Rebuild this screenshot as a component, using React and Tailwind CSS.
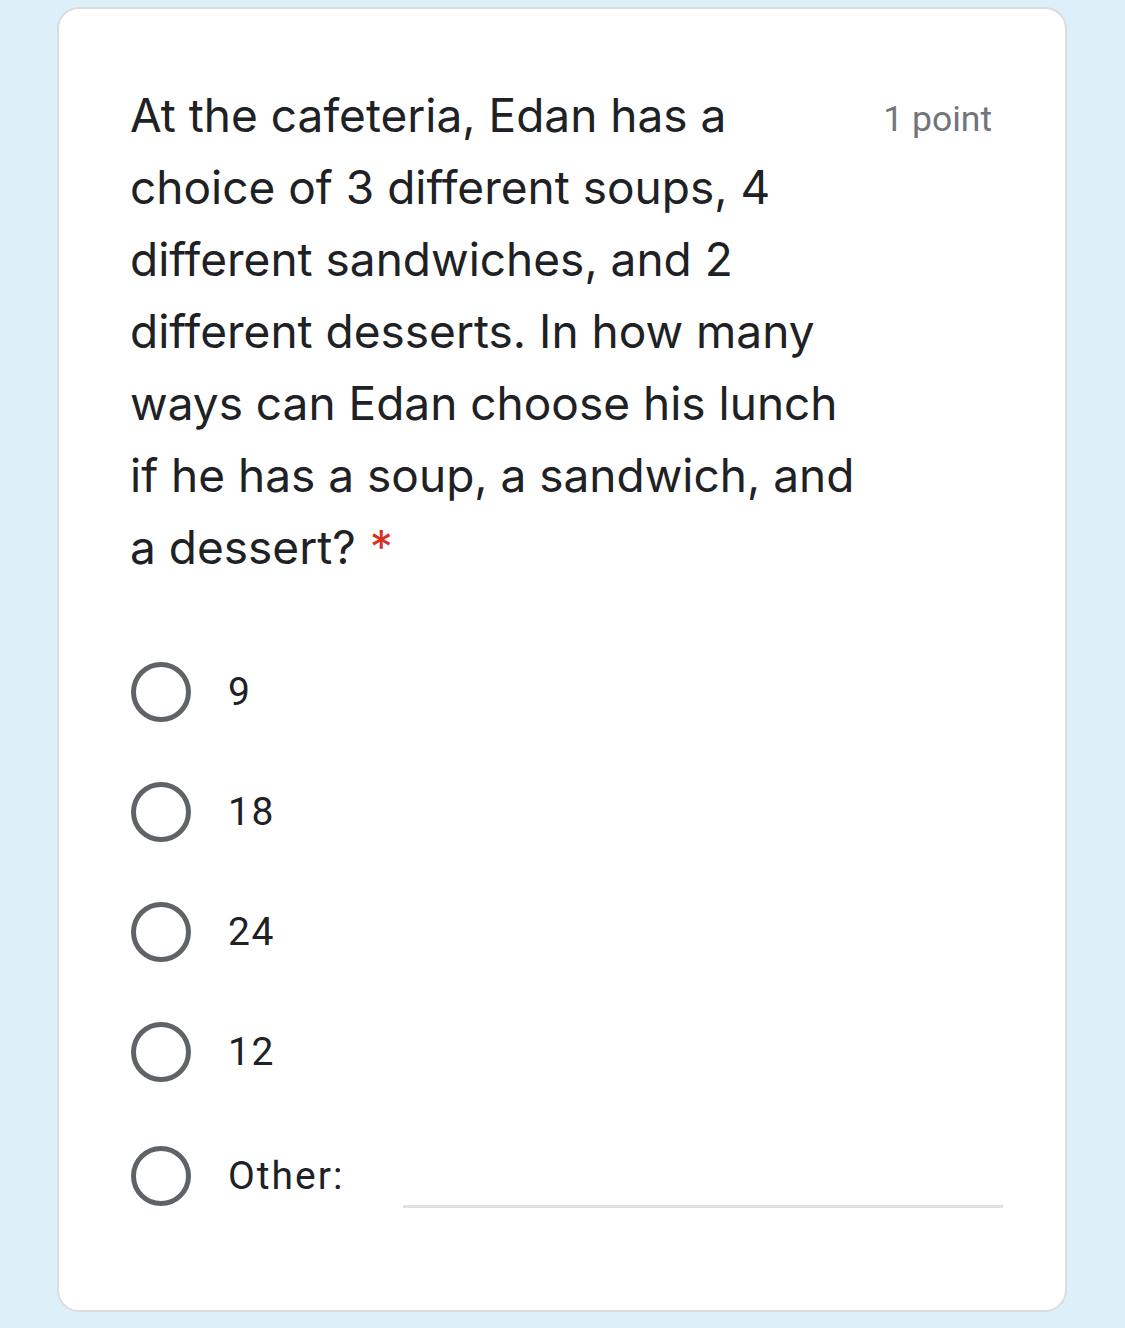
export default function App() {
  const options = ["9", "18", "24", "12"];
  return (
    <div className="w-[1125px] h-[1328px] bg-[#ddf0fa] pt-[7px] pl-[57px]">
      <div className="w-[1010px] h-[1305px] bg-white border-2 border-[#dadce0] rounded-[22px] pt-[70px] px-[73px]">
        <div className="flex justify-between items-start">
          <div
            className="w-[730px] -ml-[2px] text-[46px] leading-[72px] text-[#202124]"
            style={{ fontFamily: "Inter, 'Open Sans', sans-serif" }}
          >
            At the cafeteria, Edan has a choice of 3 different soups, 4 different sandwiches, and 2 different desserts. In how many ways can Edan choose his lunch if he has a soup, a sandwich, and a dessert?
            <span className="text-[#d93025] ml-[14px]">*</span>
          </div>
          <div
            className="mt-[20px] text-[35.5px] leading-[40px] text-[#70757a] whitespace-nowrap"
            style={{ fontFamily: "Roboto, sans-serif" }}
          >
            1 point
          </div>
        </div>
        <div className="mt-[49px]" style={{ fontFamily: "Roboto, sans-serif" }}>
          {options.map((o) => (
            <div key={o} className="h-[120px] flex items-center">
              <div className="w-[60px] h-[60px] rounded-full border-[5px] border-[#5f6368] -ml-px shrink-0" />
              <div className="ml-[37px] text-[39px] tracking-[1.5px] text-[#202124]">{o}</div>
            </div>
          ))}
          <div className="h-[128px] flex items-center">
            <div className="w-[60px] h-[60px] rounded-full border-[5px] border-[#5f6368] -ml-px shrink-0" />
            <div className="ml-[37px] w-[175px] shrink-0 text-[39px] tracking-[2px] text-[#202124]">Other:</div>
            <div className="w-[600px] shrink-0 h-[64px] border-b-[3px] border-[#e0e0e0]" />
          </div>
        </div>
      </div>
    </div>
  );
}
